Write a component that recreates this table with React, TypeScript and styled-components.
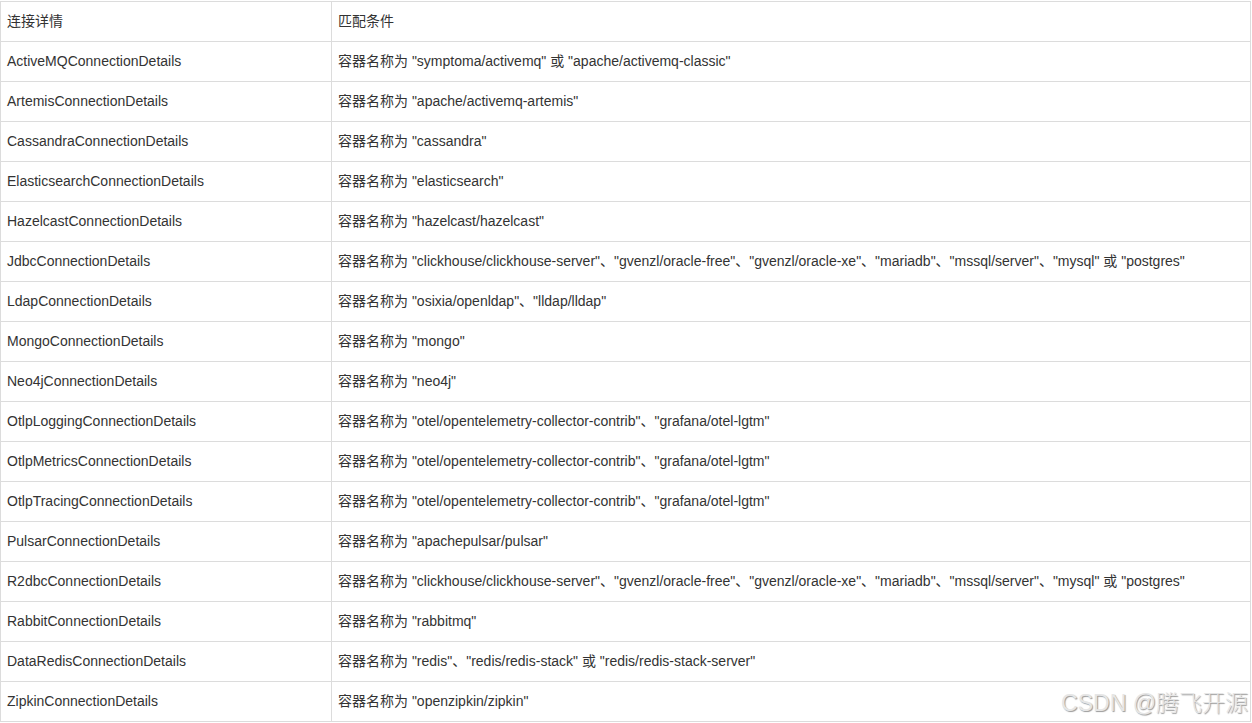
import React from 'react'
import styled, { createGlobalStyle } from 'styled-components';

const rows: [string, string][] = [
  ['ActiveMQConnectionDetails', '容器名称为 "symptoma/activemq" 或 "apache/activemq-classic"'],
  ['ArtemisConnectionDetails', '容器名称为 "apache/activemq-artemis"'],
  ['CassandraConnectionDetails', '容器名称为 "cassandra"'],
  ['ElasticsearchConnectionDetails', '容器名称为 "elasticsearch"'],
  ['HazelcastConnectionDetails', '容器名称为 "hazelcast/hazelcast"'],
  ['JdbcConnectionDetails', '容器名称为 "clickhouse/clickhouse-server"、"gvenzl/oracle-free"、"gvenzl/oracle-xe"、"mariadb"、"mssql/server"、"mysql" 或 "postgres"'],
  ['LdapConnectionDetails', '容器名称为 "osixia/openldap"、"lldap/lldap"'],
  ['MongoConnectionDetails', '容器名称为 "mongo"'],
  ['Neo4jConnectionDetails', '容器名称为 "neo4j"'],
  ['OtlpLoggingConnectionDetails', '容器名称为 "otel/opentelemetry-collector-contrib"、"grafana/otel-lgtm"'],
  ['OtlpMetricsConnectionDetails', '容器名称为 "otel/opentelemetry-collector-contrib"、"grafana/otel-lgtm"'],
  ['OtlpTracingConnectionDetails', '容器名称为 "otel/opentelemetry-collector-contrib"、"grafana/otel-lgtm"'],
  ['PulsarConnectionDetails', '容器名称为 "apachepulsar/pulsar"'],
  ['R2dbcConnectionDetails', '容器名称为 "clickhouse/clickhouse-server"、"gvenzl/oracle-free"、"gvenzl/oracle-xe"、"mariadb"、"mssql/server"、"mysql" 或 "postgres"'],
  ['RabbitConnectionDetails', '容器名称为 "rabbitmq"'],
  ['DataRedisConnectionDetails', '容器名称为 "redis"、"redis/redis-stack" 或 "redis/redis-stack-server"'],
  ['ZipkinConnectionDetails', '容器名称为 "openzipkin/zipkin"'],
]

const GlobalStyle = createGlobalStyle`
  body {
    margin: 0;
    background: #fff;
    font-family: "Liberation Sans", Arial, "Noto Sans CJK SC", sans-serif;
  }
`;

export default function App() {
  return (
    <>
      <GlobalStyle />
      <Page>
        <Table>
          <colgroup>
            <col style={{ width: 331 }} />
            <col />
          </colgroup>
          <thead>
            <tr>
              <HeadCell>连接详情</HeadCell>
              <HeadCell>匹配条件</HeadCell>
            </tr>
          </thead>
          <tbody>
            {rows.map(([name, cond]) => (
              <tr key={name}>
                <Cell>{name}</Cell>
                <Cell>{cond}</Cell>
              </tr>
            ))}
          </tbody>
        </Table>
        <Watermark>CSDN @腾飞开源</Watermark>
      </Page>
    </>
  )
}

const Page = styled.div`
  position: relative;
  width: 1252px;
  padding-top: 1px;
`;

const Table = styled.table`
  width: 1251px;
  border-collapse: collapse;
  table-layout: fixed;
  font-size: 14px;
  color: #333;
`;

const Cell = styled.td`
  height: 37px;
  padding: 0 6px 2px 6px;
  border: 1px solid #dcdcdc;
  text-align: left;
  vertical-align: middle;
  white-space: nowrap;
  line-height: 20px;
`;

const HeadCell = styled(Cell).attrs({ as: 'th' })`
  font-weight: normal;
`;

const Watermark = styled.div`
  position: absolute;
  right: 4px;
  bottom: 5px;
  font-size: 23px;
  line-height: 28px;
  color: #e6e6e6;
  text-shadow: 1px 1px 1px #9a9a9a;
  font-family: "Liberation Sans", "Noto Sans CJK SC", sans-serif;
  font-weight: 300;
`;
